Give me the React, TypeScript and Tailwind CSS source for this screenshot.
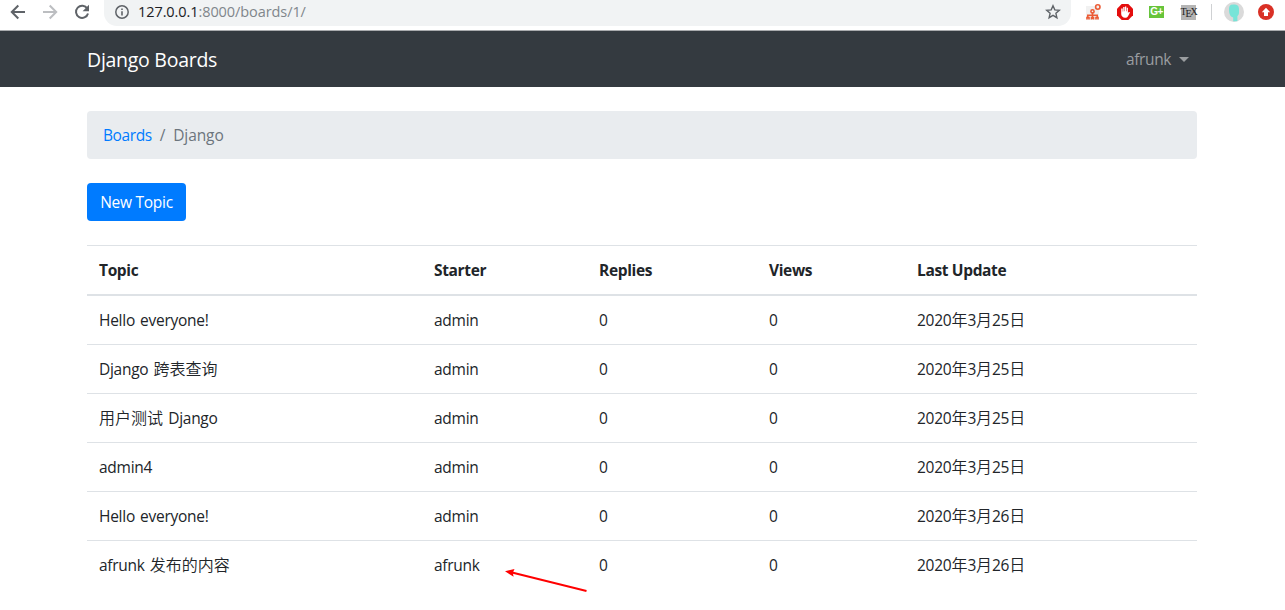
import React from "react";

const CJK = /([\u4e00-\u9fff]+)/;

function Mixed({ text }: { text: string }) {
  return (
    <>
      {text.split(CJK).map((part, i) =>
        CJK.test(part) ? (
          <span key={i} className="text-[16px] font-[350] tracking-normal">{part}</span>
        ) : (
          part
        )
      )}
    </>
  );
}

const topics = [
  ["Hello everyone!", "admin", "0", "0", "2020年3月25日"],
  ["Django 跨表查询", "admin", "0", "0", "2020年3月25日"],
  ["用户测试 Django", "admin", "0", "0", "2020年3月25日"],
  ["admin4", "admin", "0", "0", "2020年3月25日"],
  ["Hello everyone!", "admin", "0", "0", "2020年3月26日"],
  ["afrunk 发布的内容", "afrunk", "0", "0", "2020年3月26日"],
];

const columns = "grid grid-cols-[335px_165px_170px_148px_1fr] [&>div]:pl-3 whitespace-nowrap";

function BrowserBar() {
  return (
    <header className="flex h-[30px] bg-white tracking-normal">
      <div className="flex h-6 w-[104px] shrink-0 items-center pl-[10px] gap-4">
        <svg width="16" height="16" viewBox="0 0 16 16" fill="none" stroke="#5f6368" strokeWidth="2">
          <path d="M15 8H2M8.3 1.5 1.8 8l6.5 6.5" />
        </svg>
        <svg width="16" height="16" viewBox="0 0 16 16" fill="none" stroke="#bcbec1" strokeWidth="2">
          <path d="M1 8h13M7.7 1.5 14.2 8l-6.5 6.5" />
        </svg>
        <svg width="16" height="16" viewBox="0 0 16 16">
          <path d="M13.3 4.6A6.1 6.1 0 1 0 14 9.4" fill="none" stroke="#5f6368" strokeWidth="2" />
          <path d="M15 .8v6.4H8.6z" fill="#5f6368" />
        </svg>
      </div>
      <div className="flex h-[26px] w-[967px] shrink-0 items-center rounded-b-[13px] bg-[#f1f3f4] pb-0.5 pl-[10px] pr-[10px]">
        <svg width="16" height="16" viewBox="0 0 16 16" fill="none" stroke="#5f6368">
          <circle cx="8" cy="8" r="6.2" strokeWidth="1.5" />
          <path d="M8 7.2v4.2M8 4.4v1.6" strokeWidth="1.6" />
        </svg>
        <span className="ml-2 text-[14.5px] tracking-[-0.08px] text-[#202124]">
          127.0.0.1<span className="text-[#80868b]">:8000/boards/1/</span>
        </span>
        <svg className="ml-auto" width="16" height="16" viewBox="0 0 16 16" fill="none" stroke="#5f6368" strokeWidth="1.4">
          <path d="m8 1.8 1.8 4.1 4.5.4-3.4 3 1 4.4L8 11.4l-3.9 2.3 1-4.4-3.4-3 4.5-.4z" />
        </svg>
      </div>
      <div className="flex h-6 items-center pl-[14px]">
        <svg width="16" height="18" viewBox="0 0 16 18">
          <rect x="1" y="3" width="13" height="14" fill="#f1f1f1" />
          <g fill="none" stroke="#ec5b35" strokeWidth="1.6">
            <circle cx="7.5" cy="8.4" r="1.6" />
            <path d="M7.5 9.5V16M2.8 14v-1.8h9.4V14M2 16.5v-2h2v2M6.5 16.5v-2h2v2M11 16.5v-2h2v2" />
            <circle cx="12.8" cy="4" r="2.2" />
          </g>
        </svg>
        <svg className="ml-4" width="16" height="16" viewBox="0 0 16 16">
          <path d="M4.7 0h6.6L16 4.7v6.6L11.3 16H4.7L0 11.3V4.7z" fill="#e40d0d" />
          <path d="M4.2 6v4c0 2 1.6 3.7 3.8 3.7 1.8 0 2.7-.9 3.4-2.3l1.5-3c-.8-.7-1.4-.2-2 .6V3.8H9.8v3.4h-.5V2.5H8v4.7h-.4V3H6.2v4.4h-.5V4.6H4.2z" fill="#fff" />
        </svg>
        <span className="ml-4 flex h-3 w-[15px] items-center justify-center bg-[#67c43a] font-['Liberation_Sans',sans-serif] text-[10px] font-bold leading-3 tracking-[-0.5px] text-white">G+</span>
        <span className="ml-[17px] flex h-[15px] w-[15px] items-start justify-center bg-[#b5b5b5] font-['Liberation_Serif',serif] text-[10px] leading-[14px] tracking-[-1.2px] text-[#222]">
          T<span className="pt-[2px]">E</span>X
        </span>
        <span className="ml-[15px] h-4 w-px bg-[#cfd1d3]" />
        <svg className="ml-3" width="20" height="20" viewBox="0 0 20 20">
          <circle cx="10" cy="10" r="10" fill="#dadada" />
          <path d="M5 7.5C5 3 7 2.6 10 2.6s5 .8 5 4.9v3c0 2-.8 3-1.6 3.5v5.3H9.2v-3.9C6 15 5 11 5 7.5z" fill="#77e4d8" />
        </svg>
        <svg className="ml-[14px]" width="16" height="16" viewBox="0 0 16 16">
          <circle cx="8" cy="8" r="8" fill="#d93025" />
          <path d="M8 3.8 12.2 8.3H10V12H6V8.3H3.8z" fill="#fff" />
        </svg>
      </div>
    </header>
  );
}

export default function App() {
  return (
    <div className="relative h-[610px] w-[1285px] overflow-hidden bg-white font-['Open_Sans','Noto_Sans_CJK_SC',sans-serif] text-[15.5px] leading-6 tracking-[-0.27px] text-[#212529]">
      <BrowserBar />
      <nav className="flex h-[57px] items-center justify-between border-t border-[#a9abae] bg-[#343a40] pl-[87px] pr-24">
        <span className="pt-0.5 text-[19.5px] text-white">Django Boards</span>
        <span className="flex items-center tracking-[-0.4px] text-[#9a9da0]">
          afrunk
          <svg className="ml-2" width="10" height="5" viewBox="0 0 10 5"><path d="M0 0h10L5 5z" fill="#9a9da0" /></svg>
        </span>
      </nav>
      <main className="ml-[87px] w-[1110px] pt-6">
        <div className="flex h-12 items-center rounded bg-[#e9ecef] px-4 text-[#6c757d]">
          <span className="tracking-[-0.4px] text-[#007bff]">Boards</span>
          <span className="px-2">/</span>
          <span className="tracking-[-0.1px]">Django</span>
        </div>
        <button className="mt-6 block h-[38px] w-[99px] rounded bg-[#007bff] tracking-[-0.27px] text-white">New Topic</button>
        <div className="mt-6">
          <div className={`${columns} h-[51px] border-b-2 border-t border-[#dee2e6] pt-3 font-bold tracking-[-0.35px]`}>
            <div>Topic</div><div>Starter</div><div>Replies</div><div>Views</div><div>Last Update</div>
          </div>
          {topics.map((row, r) => (
            <div key={r} className={`${columns} h-[49px] pt-3 [word-spacing:1.4px] ${r < 5 ? "border-b border-[#dee2e6]" : ""}`}>
              {row.map((cell, c) => (
                <div key={c}><Mixed text={cell} /></div>
              ))}
            </div>
          ))}
        </div>
      </main>
      <svg className="absolute left-[504px] top-[566px]" width="86" height="28" viewBox="0 0 86 28">
        <path d="M8 6.5 82.5 25" stroke="#f00" strokeWidth="2" />
        <path d="M1 5.3 10.5 3 8.8 6.7l.8 4z" fill="#f00" />
      </svg>
    </div>
  );
}
